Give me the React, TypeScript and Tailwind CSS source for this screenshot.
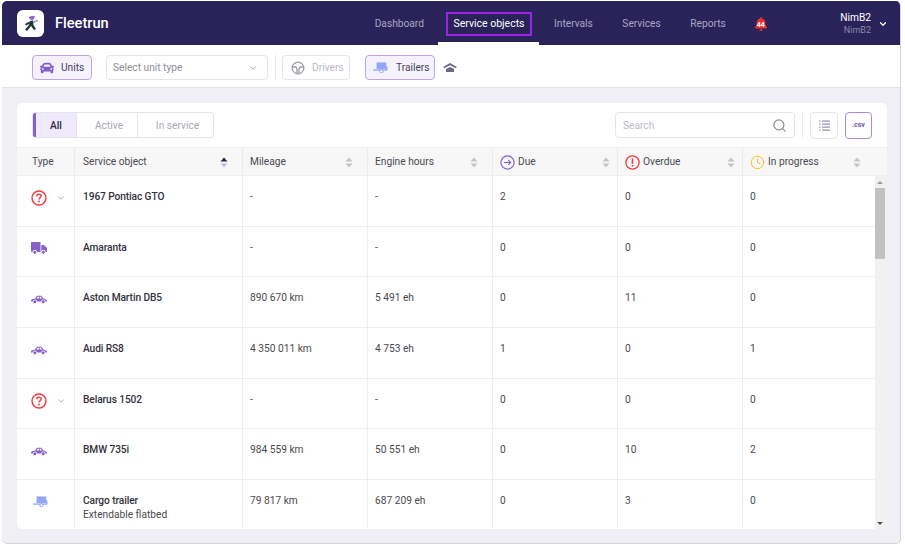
import { ChevronDown, Search, Clock } from 'lucide-react';
import { FaCar, FaBell } from 'react-icons/fa';

const navItems = ['Dashboard', 'Service objects', 'Intervals', 'Services', 'Reports'];

type Row = {
  type: 'unknown' | 'truck' | 'car' | 'trailer';
  name: string;
  sub?: string;
  mileage: string;
  hours: string;
  due: string;
  overdue: string;
  progress: string;
};

const rows: Row[] = [
  { type: 'unknown', name: '1967 Pontiac GTO', mileage: '-', hours: '-', due: '2', overdue: '0', progress: '0' },
  { type: 'truck', name: 'Amaranta', mileage: '-', hours: '-', due: '0', overdue: '0', progress: '0' },
  { type: 'car', name: 'Aston Martin DB5', mileage: '890 670 km', hours: '5 491 eh', due: '0', overdue: '11', progress: '0' },
  { type: 'car', name: 'Audi RS8', mileage: '4 350 011 km', hours: '4 753 eh', due: '1', overdue: '0', progress: '1' },
  { type: 'unknown', name: 'Belarus 1502', mileage: '-', hours: '-', due: '0', overdue: '0', progress: '0' },
  { type: 'car', name: 'BMW 735i', mileage: '984 559 km', hours: '50 551 eh', due: '0', overdue: '10', progress: '2' },
  { type: 'trailer', name: 'Cargo trailer', sub: 'Extendable flatbed', mileage: '79 817 km', hours: '687 209 eh', due: '0', overdue: '3', progress: '0' },
];

const gridCols = 'grid grid-cols-[57px_168px_125px_125px_125px_125px_1fr]';

const SortArrows = ({ active }: { active?: boolean }) => (
  <svg width="8" height="11" viewBox="0 0 8 11" className="shrink-0">
    <path d="M4 0.5 L7.5 4.5 H0.5 Z" fill={active ? '#2a2359' : '#c4c4c9'} />
    <path d="M4 10.5 L7.5 6.5 H0.5 Z" fill="#c4c4c9" />
  </svg>
);

const TrailerIcon = ({ size = 18 }: { size?: number }) => (
  <svg width={size} height={size * 0.72} viewBox="0 0 18 13">
    <rect x="4" y="0.5" width="11" height="7.5" fill="#8fa6f5" />
    <rect x="0" y="8.5" width="16" height="1.2" fill="#7f97ee" />
    <circle cx="9.5" cy="10.5" r="1.8" fill="#fff" stroke="#7f97ee" strokeWidth="1" />
    <rect x="15" y="5" width="1.2" height="4" fill="#7f97ee" />
  </svg>
);

const SideCar = () => (
  <svg width="16" height="9" viewBox="0 0 16 9">
    <path
      d="M1 4.2 L4.2 3.6 L6 0.8 H10.4 L12.4 3.6 L15 4.4 C15.7 4.7 16 5.4 16 6.6 H0 C0 5.4 0.2 4.5 1 4.2 Z"
      fill="#8560c9"
    />
    <path d="M6.6 1.7 H7.9 V3.5 H5.5 Z M8.7 1.7 H10 L11 3.5 H8.7 Z" fill="#fff" />
    <circle cx="3.8" cy="6.8" r="1.9" fill="#8560c9" stroke="#fff" strokeWidth="0.8" />
    <circle cx="12.2" cy="6.8" r="1.9" fill="#8560c9" stroke="#fff" strokeWidth="0.8" />
  </svg>
);

const Truck = () => (
  <svg width="16" height="13" viewBox="0 0 16 13">
    <path d="M0 1 a1 1 0 0 1 1-1 H9.5 V10 H1 a1 1 0 0 1-1-1 Z" fill="#8560c9" />
    <path d="M10.3 3 H13 L16 6 V10 H10.3 Z" fill="#8560c9" />
    <circle cx="3.8" cy="10.3" r="2" fill="#8560c9" stroke="#fff" strokeWidth="1" />
    <circle cx="12.4" cy="10.3" r="2" fill="#8560c9" stroke="#fff" strokeWidth="1" />
  </svg>
);

const Question = () => (
  <svg width="16" height="16" viewBox="0 0 16 16" fill="none">
    <circle cx="8" cy="8" r="7" stroke="#ee3b3b" strokeWidth="1.4" />
    <path d="M5.8 6.2 C5.8 4.9 6.8 4.2 8 4.2 C9.3 4.2 10.2 5 10.2 6.1 C10.2 7.6 8 7.6 8 9.4" stroke="#ee3b3b" strokeWidth="1.4" />
    <circle cx="8" cy="11.5" r="0.9" fill="#ee3b3b" />
  </svg>
);

const TypeIcon = ({ type }: { type: Row['type'] }) => {
  if (type === 'unknown') {
    return (
      <div className="flex items-center gap-[9px]">
        <Question />
        <ChevronDown size={10} className="text-[#a5a5ab]" />
      </div>
    );
  }
  if (type === 'truck') return <Truck />;
  if (type === 'car') return <SideCar />;
  return <TrailerIcon size={16} />;
};

export default function App() {
  return (
    <div className="w-[905px] h-[547px] bg-white pt-px pl-[2px] font-['Roboto',sans-serif] text-[10.2px] overflow-hidden">
      <div className="w-[899px] h-[543px] flex flex-col rounded-[5px] overflow-hidden bg-[#f0eff5] border-b border-r border-[#d4d4da]">
        {/* Top bar */}
        <header className="h-[44px] shrink-0 bg-[#2a2359] flex items-center">
          <div className="ml-[15px] mt-[1px] w-[27px] h-[27px] bg-white rounded-[6px] flex items-center justify-center">
            <svg width="19" height="19" viewBox="0 0 19 19">
              <circle cx="11" cy="4" r="2.2" fill="#a77fe0" />
              <path d="M8 3 L14 2 L13 4.5 L8 4.5 Z" fill="#8560c9" />
              <path d="M9 7 L12 6.5 L12.5 11 L15 15 L13 16 L10 12 L6 17 L4 15.5 L8 11 Z" fill="#22333b" />
              <path d="M12 7.5 L16 5.5 L17 7 L12.5 9.5 Z" fill="#9aa0a6" />
              <path d="M8.5 7.5 L4 10 L5 11.5 L9 9.5 Z" fill="#22333b" />
            </svg>
          </div>
          <span className="ml-[11px] mt-[1px] text-[14.6px] font-medium text-white leading-none">Fleetrun</span>
          <nav className="ml-[266px] flex items-center h-full gap-[29.5px]">
            {navItems.map((item) =>
              item === 'Service objects' ? (
                <div key={item} className="relative h-full flex items-center text-[10.5px]">
                  <span className="mt-[1px] text-white whitespace-nowrap">{item}</span>
                  <div className="absolute top-[11px] h-[24px] -left-[7px] -right-[7px] border-2 border-[#9b22e6]" />
                  <div className="absolute bottom-0 -left-[15px] -right-[14px] h-[3px] bg-white" />
                </div>
              ) : (
                <span key={item} className="mt-[1px] text-[#aaa6c4] whitespace-nowrap">
                  {item}
                </span>
              ),
            )}
          </nav>
          <div className="relative ml-[28px] mt-[1px] text-[#ee2f2f]">
            <FaBell size={14} />
            <span className="absolute inset-0 top-[3px] flex items-center justify-center text-[7px] font-bold text-white">44</span>
          </div>
          <div className="ml-auto mt-[2px] flex flex-col items-end leading-none">
            <span className="text-white font-normal">NimB2</span>
            <span className="mt-[2px] text-[9px] text-[#8d88ad]">NimB2</span>
          </div>
          <ChevronDown size={10} strokeWidth={3} className="ml-[7px] mr-[12px] mt-[1px] text-white" />
        </header>

        {/* Filters toolbar */}
        <div className="h-[43px] shrink-0 bg-white border-b border-[#e3e3e8] flex items-center pl-[30px] pt-[2px]">
          <button className="w-[60px] h-[25px] rounded-[4px] border border-[#bda4e3] bg-[#f5f1fd] flex items-center gap-[7px] pl-[7px] pt-[1px] text-[#45445a]">
            <FaCar size={14} className="text-[#8560c9]" />
            Units
          </button>
          <div className="ml-[14px] w-[162px] h-[25px] rounded-[4px] border border-[#e4e4e9] flex items-center justify-between pl-[6px] pr-[9px] pt-[1px] text-[#8e8e96]">
            Select unit type
            <ChevronDown size={10} className="text-[#8e8e96]" />
          </div>
          <div className="ml-[7px] w-px h-[25px] bg-[#e8e8ec]" />
          <button className="ml-[6px] w-[68px] h-[25px] rounded-[4px] border border-[#e4e4e9] flex items-center gap-[7px] pl-[8px] pt-[1px] text-[#b9b9bf]">
            <svg width="14" height="14" viewBox="0 0 14 14" fill="none" stroke="#9c9ca6" strokeWidth="1.3">
              <circle cx="7" cy="7" r="5.8" />
              <path d="M1.5 6 H5 L6 8 V12.5 M12.5 6 H9 L8 8 V12.5" />
            </svg>
            Drivers
          </button>
          <button className="ml-[15px] w-[70px] h-[25px] rounded-[4px] border border-[#bda4e3] bg-[#f5f1fd] flex items-center gap-[7px] pl-[7px] pt-[1px] text-[#45445a]">
            <TrailerIcon size={16} />
            Trailers
          </button>
          <svg className="ml-[8px]" width="14" height="9" viewBox="0 0 14 9">
            <path d="M0 4 L7 0 L14 4 L12.5 5 L7 2.2 L1.5 5 Z" fill="#6a6888" />
            <path d="M3 6 L7 4 L11 6 L11 9 H3 Z" fill="#6a6888" />
          </svg>
        </div>

        {/* Main card */}
        <main className="mt-[15px] ml-[15px] w-[870px] h-[426px] bg-white rounded-[5px] overflow-hidden flex flex-col">
          <div className="h-[44px] shrink-0 flex items-center pl-[15px] pr-[15px]">
            <div className="flex h-[26px] rounded-[3px] border border-[#e4e4e9] overflow-hidden">
              <span className="w-[44px] -ml-px pt-[2px] border-l-[4px] border-[#8560c9] bg-[#eeeafc] flex items-center justify-center font-medium text-[#2e2c44]">All</span>
              <span className="w-[61px] pl-[4px] pt-[2px] border-l border-[#e4e4e9] flex items-center justify-center text-[#a9a9b0]">Active</span>
              <span className="w-[76px] pl-[4px] pt-[2px] border-l border-[#e4e4e9] flex items-center justify-center text-[#a9a9b0]">In service</span>
            </div>
            <div className="ml-auto w-[180px] h-[26px] rounded-[4px] border border-[#e4e4e9] flex items-center justify-between pl-[7px] pr-[7px] text-[#bdbdc4]">
              <span className="mt-[2px]">Search</span>
              <Search size={15} className="text-[#8e8e96]" />
            </div>
            <div className="ml-[7px] w-px h-[26px] bg-[#ececf0]" />
            <button className="ml-[7px] w-[28px] h-[27px] rounded-[4px] border border-[#e4e4e9] flex items-center justify-center">
              <svg width="11" height="11" viewBox="0 0 11 11" fill="#8f8caf">
                <rect x="0" y="0.5" width="1.5" height="1.2" />
                <rect x="0" y="3.5" width="1.5" height="1.2" />
                <rect x="0" y="6.5" width="1.5" height="1.2" />
                <rect x="0" y="9.5" width="1.5" height="1.2" />
                <rect x="3" y="0.5" width="8" height="1.2" />
                <rect x="3" y="3.5" width="8" height="1.2" />
                <rect x="3" y="6.5" width="8" height="1.2" />
                <rect x="3" y="9.5" width="8" height="1.2" />
              </svg>
            </button>
            <button className="ml-[7px] w-[27px] h-[27px] rounded-[4px] border border-[#a98bdc] flex items-center justify-center text-[7px] font-bold text-[#6d5aa8]">
              .csv
            </button>
          </div>

          {/* Table head */}
          <div className={`${gridCols} h-[29px] shrink-0 bg-[#f7f7f8] border-y border-[#eeeef1] text-[#4a4a52]`}>
            <div className="pl-[15px] pt-[1px] flex items-center">Type</div>
            <div className="pl-[8px] pr-[14px] pt-[1px] flex items-center justify-between border-l border-[#eaeaee]">
              Service object
              <SortArrows active />
            </div>
            {['Mileage', 'Engine hours'].map((h) => (
              <div key={h} className="pl-[7px] pr-[14px] pt-[1px] flex items-center justify-between border-l border-[#eaeaee]">
                {h}
                <SortArrows />
              </div>
            ))}
            <div className="pl-[7px] pr-[7px] pt-[1px] flex items-center border-l border-[#eaeaee]">
              <svg width="15" height="15" viewBox="0 0 15 15" fill="none" stroke="#8560c9" className="mr-[3px]">
                <circle cx="7.5" cy="7.5" r="6.6" strokeWidth="1.2" />
                <path d="M4 7.5 H10.5 M8.3 5.2 L10.7 7.5 L8.3 9.8" strokeWidth="1.1" />
              </svg>
              Due
              <span className="ml-auto"><SortArrows /></span>
            </div>
            <div className="pl-[7px] pr-[7px] pt-[1px] flex items-center border-l border-[#eaeaee]">
              <svg width="15" height="15" viewBox="0 0 15 15" fill="none" stroke="#ee3b3b" className="mr-[3px]">
                <circle cx="7.5" cy="7.5" r="6.6" strokeWidth="1.3" />
                <path d="M7.5 3.5 V8.8" strokeWidth="1.6" />
                <path d="M7.5 10 V11.6" strokeWidth="1.6" />
              </svg>
              Overdue
              <span className="ml-auto"><SortArrows /></span>
            </div>
            <div className="pl-[7px] pr-[26px] pt-[1px] flex items-center border-l border-[#eaeaee]">
              <Clock size={15} strokeWidth={1.6} className="mr-[3px] text-[#f5c21f]" />
              In progress
              <span className="ml-auto"><SortArrows /></span>
            </div>
          </div>

          {/* Table body with scrollbar */}
          <div className="flex-1 flex min-h-0">
            <div className="flex-1 min-w-0 overflow-hidden">
              {rows.map((r) => (
                <div key={r.name} className={`${gridCols} h-[50.7px] border-b border-[#eeeef1] text-[#4a4a50]`}>
                  <div className="pl-[14px] pt-[14px] h-full">
                    <div className={`flex items-center h-[16px] ${r.type === 'trailer' ? 'pl-[2px]' : ''}`}>
                      <TypeIcon type={r.type} />
                    </div>
                  </div>
                  <div className="pl-[8px] pt-[14px] border-l border-[#eeeef1] leading-[14px]">
                    <div className="font-medium tracking-[-0.1px] text-[#33323c]">{r.name}</div>
                    {r.sub && <div className="text-[#4a4a50]">{r.sub}</div>}
                  </div>
                  {[r.mileage, r.hours, r.due, r.overdue, r.progress].map((v, i) => (
                    <div key={i} className="pl-[7px] pt-[14px] leading-[14px] border-l border-[#eeeef1]">
                      {v}
                    </div>
                  ))}
                </div>
              ))}
            </div>
            <div className="w-[12px] shrink-0 bg-[#f1f1f1] flex flex-col items-center pt-[5px] pr-[2px] pb-[4px]">
              <div className="w-0 h-0 border-x-[3px] border-x-transparent border-b-[3px] border-b-[#9a9a9a]" />
              <div className="mt-[4px] w-[10px] h-[71px] bg-[#c1c1c1]" />
              <div className="mt-auto w-0 h-0 border-x-[3px] border-x-transparent border-t-[3px] border-t-[#505050]" />
            </div>
          </div>
        </main>
      </div>
    </div>
  );
}
